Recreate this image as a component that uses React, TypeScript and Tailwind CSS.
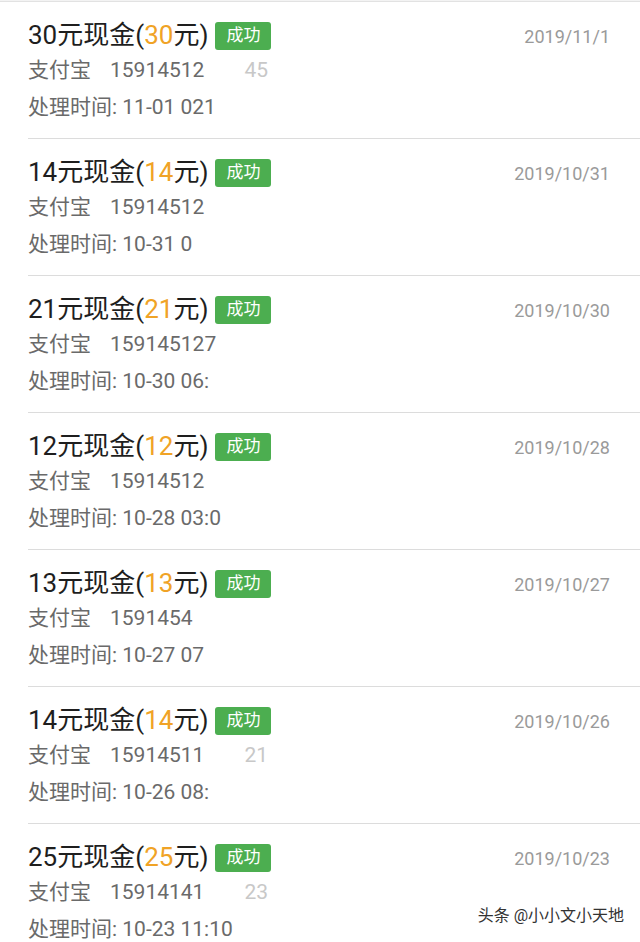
const rows = [
  { amount: 30, date: "2019/11/1", account: "15914512", tail: "45", time: "11-01 021" },
  { amount: 14, date: "2019/10/31", account: "15914512", tail: "", time: "10-31 0" },
  { amount: 21, date: "2019/10/30", account: "159145127", tail: "", time: "10-30 06:" },
  { amount: 12, date: "2019/10/28", account: "15914512", tail: "", time: "10-28 03:0" },
  { amount: 13, date: "2019/10/27", account: "1591454", tail: "", time: "10-27 07" },
  { amount: 14, date: "2019/10/26", account: "15914511", tail: "21", time: "10-26 08:" },
  { amount: 25, date: "2019/10/23", account: "15914141", tail: "23", time: "10-23 11:10" },
]

const font = { fontFamily: "Roboto, 'Noto Sans CJK SC', sans-serif" }

function Row({ amount, date, account, tail, time }: (typeof rows)[number]) {
  return (
    <div className="pl-7">
      <div className="flex h-[137px] flex-col border-b border-[#dcdcdc] pr-[30px] pt-[16px]">
        <div className="flex h-[34px] items-center">
          <span className="text-[26px] leading-none text-[#1e1e1e]">
            {amount}元现金(<span className="text-[#f0a326]">{amount}</span>元)
          </span>
          <span className="ml-[7px] mt-[2px] flex h-[28px] items-center rounded-[3px] bg-[#4cae50] px-[11px] text-[17px] text-white">
            成功
          </span>
          <span className="ml-auto mt-[2px] text-[18px] text-[#9a9a9a]">{date}</span>
        </div>
        <div className="flex h-[37px] items-center text-[21px] text-[#6a6a6a]">
          <span>支付宝</span>
          <span className="ml-[19px]">{account}</span>
          {tail && <span className="ml-[40px] text-[#c8c8c8]">{tail}</span>}
        </div>
        <div className="flex h-[37px] items-center text-[21px] text-[#6a6a6a]">
          处理时间: {time}
        </div>
      </div>
    </div>
  )
}

export default function App() {
  return (
    <div className="relative h-[942px] w-[640px] overflow-hidden bg-white" style={font}>
      <div className="h-[2px] border-b border-[#e2e2e2] bg-[#f3f3f3]" />
      {rows.map((r, i) => (
        <Row key={i} {...r} />
      ))}
      <div
        className="absolute bottom-[14px] right-[16px] text-[16px] text-[#333]"
        style={{ textShadow: "0 0 2px #fff, 0 0 2px #fff" }}
      >
        头条 @小小文小天地
      </div>
    </div>
  )
}
